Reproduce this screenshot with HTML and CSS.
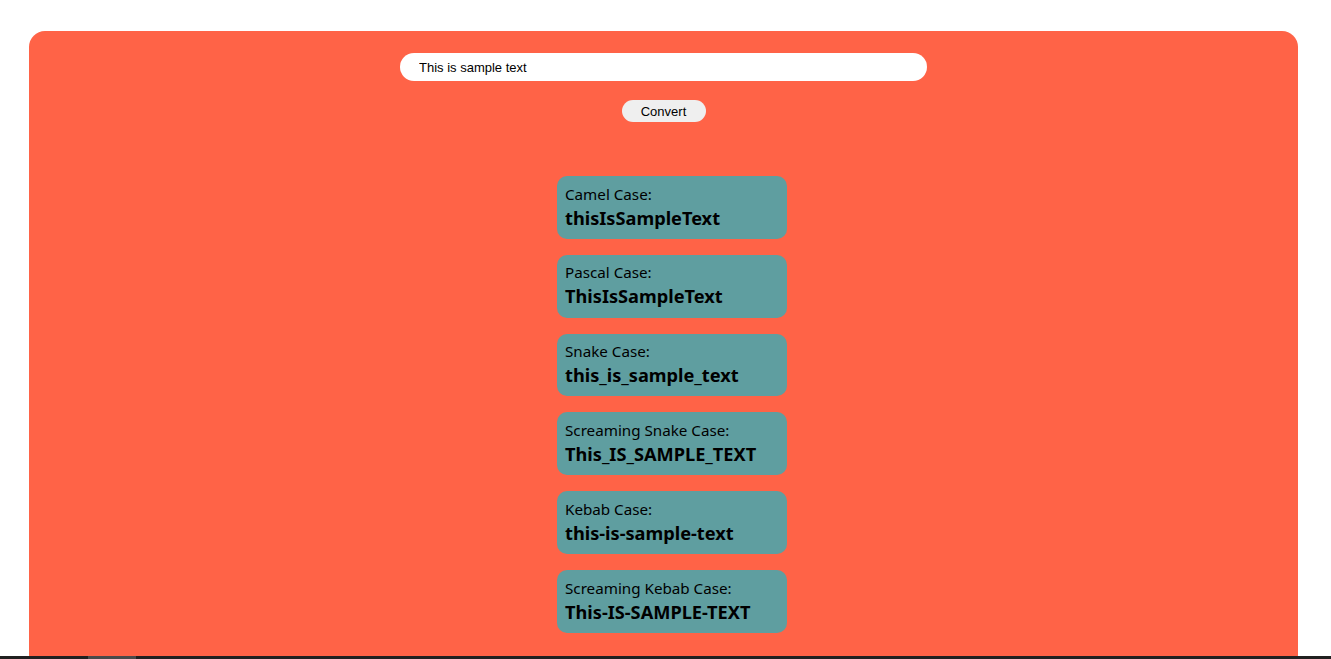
FILE: index.html
```html
<!DOCTYPE html>
<html>
<head>
<meta charset="utf-8">
<link rel="stylesheet" href="styles.css">
</head>
<body>
<main class="panel">
  <input class="text-input" type="text" value="This is sample text">
  <button class="convert-btn">Convert</button>
  <section class="results">
    <div class="card"><div class="label">Camel Case:</div><div class="value">thisIsSampleText</div></div>
    <div class="card"><div class="label">Pascal Case:</div><div class="value">ThisIsSampleText</div></div>
    <div class="card"><div class="label">Snake Case:</div><div class="value">this_is_sample_text</div></div>
    <div class="card"><div class="label">Screaming Snake Case:</div><div class="value">This_IS_SAMPLE_TEXT</div></div>
    <div class="card"><div class="label">Kebab Case:</div><div class="value">this-is-sample-text</div></div>
    <div class="card"><div class="label">Screaming Kebab Case:</div><div class="value">This-IS-SAMPLE-TEXT</div></div>
  </section>
</main>
<div class="taskbar"><span class="taskbar-item"></span></div>
</body>
</html>
```

FILE: styles.css
```css
html, body {
  margin: 0;
  padding: 0;
  background: #ffffff;
  overflow: hidden;
}
body {
  padding: 31px 33px 0 29px;
  font-family: "Noto Sans", "Open Sans", sans-serif;
}
.panel {
  background: #ff6347;
  border-radius: 16px;
  height: 640px;
  display: flex;
  flex-direction: column;
  align-items: center;
  padding-top: 22px;
  box-sizing: border-box;
}
.text-input {
  width: 527px;
  height: 28px;
  box-sizing: border-box;
  border: none;
  border-radius: 14px;
  background: #fff;
  padding: 0 19px;
  font-family: "Liberation Sans", Arial, sans-serif;
  font-size: 13px;
  color: #000;
  outline: none;
}
.convert-btn {
  margin-top: 19px;
  width: 84px;
  height: 22px;
  border: none;
  border-radius: 11px;
  background: #efefef;
  font-family: "Liberation Sans", Arial, sans-serif;
  font-size: 13px;
  color: #000;
  padding: 0;
}
.results {
  margin-top: 54px;
  display: flex;
  flex-direction: column;
  gap: 16px;
  margin-left: 17px;
}
.card {
  width: 230px;
  height: 62.8px;
  box-sizing: border-box;
  background: #5f9ea0;
  border-radius: 10px;
  padding: 8.6px 8px 0 8px;
  color: #000;
}
.label {
  font-size: 15.2px;
  line-height: 19px;
}
.value {
  font-size: 18.2px;
  font-weight: 700;
  line-height: 28.7px;
}
.taskbar {
  position: fixed;
  left: 0;
  right: 0;
  bottom: 0;
  height: 3px;
  background: #202020;
}
.taskbar-item {
  display: block;
  margin-left: 88px;
  width: 48px;
  height: 3px;
  background: #4a4a4a;
}
```
